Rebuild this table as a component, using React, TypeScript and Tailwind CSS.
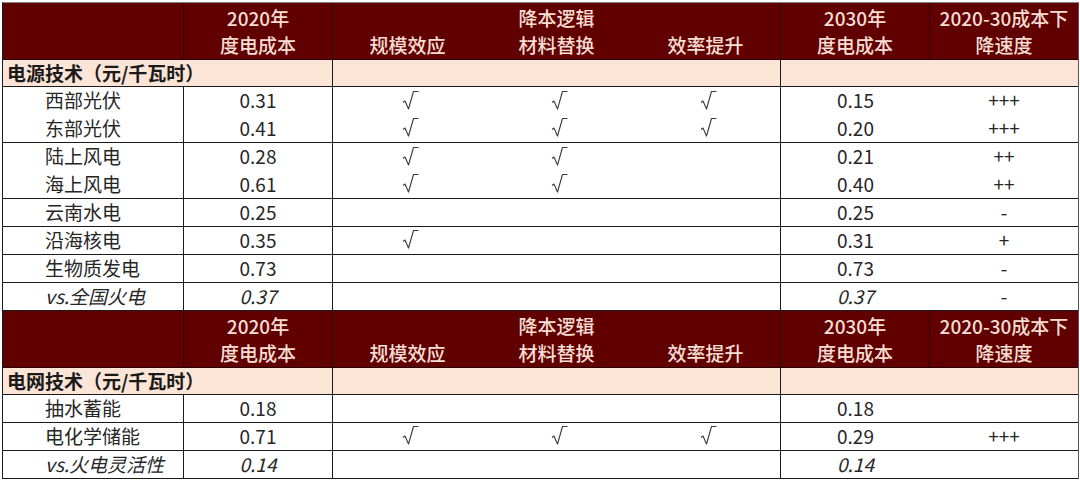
const COLS = 'grid grid-cols-[181px_149px_149px_149px_150px_149px_1fr]'

type RowData = {
  name: string
  a: string
  s?: boolean
  m?: boolean
  e?: boolean
  b: string
  speed?: string
  italic?: boolean
  line?: boolean
}

const power: RowData[] = [
  { name: '西部光伏', a: '0.31', s: true, m: true, e: true, b: '0.15', speed: '+++' },
  { name: '东部光伏', a: '0.41', s: true, m: true, e: true, b: '0.20', speed: '+++', line: true },
  { name: '陆上风电', a: '0.28', s: true, m: true, b: '0.21', speed: '++' },
  { name: '海上风电', a: '0.61', s: true, m: true, b: '0.40', speed: '++', line: true },
  { name: '云南水电', a: '0.25', b: '0.25', speed: '-', line: true },
  { name: '沿海核电', a: '0.35', s: true, b: '0.31', speed: '+', line: true },
  { name: '生物质发电', a: '0.73', b: '0.73', speed: '-', line: true },
  { name: 'vs.全国火电', a: '0.37', b: '0.37', speed: '-', italic: true, line: true },
]

const grid: RowData[] = [
  { name: '抽水蓄能', a: '0.18', b: '0.18', line: true },
  { name: '电化学储能', a: '0.71', s: true, m: true, e: true, b: '0.29', speed: '+++', line: true },
  { name: 'vs.火电灵活性', a: '0.14', b: '0.14', italic: true, line: true },
]

// radical-style tick, as drawn in the source sheet
function Tick() {
  return (
    <svg width="17" height="20" viewBox="0 0 17 20" className="-mt-[3px] ml-[6px]">
      <polyline
        points="1,12.5 3,11 6.5,19 11.5,1.5 16.5,1.5"
        fill="none"
        stroke="#3a3a3a"
        strokeWidth="1.1"
        strokeLinejoin="round"
      />
    </svg>
  )
}

function Header() {
  return (
    <div className={`${COLS} h-[57px] bg-[#600000] text-[#f9ddd2] font-medium leading-[27px] border-b border-[#2a0000]`}>
      <div className="border-r border-[#2a0000]" />
      <div className="flex flex-col items-center justify-center border-r border-[#2a0000]">
        <span>2020年</span>
        <span>度电成本</span>
      </div>
      <div className="col-span-3 flex flex-col justify-center border-r border-[#2a0000]">
        <div className="text-center">降本逻辑</div>
        <div className="grid grid-cols-3 text-center">
          <span>规模效应</span>
          <span>材料替换</span>
          <span>效率提升</span>
        </div>
      </div>
      <div className="flex flex-col items-center justify-center border-r border-[#2a0000]">
        <span>2030年</span>
        <span>度电成本</span>
      </div>
      <div className="flex flex-col items-center justify-center">
        <span>2020-30成本下</span>
        <span>降速度</span>
      </div>
    </div>
  )
}

function Section({ title }: { title: string }) {
  return (
    <div className={`${COLS} h-[27px] bg-[#fce4d6] border-b border-[#1a1a1a] text-[#1a1a1a] leading-[26px]`}>
      <div className="col-span-2 border-r border-[#1a1a1a] pl-[4px] font-bold">{title}</div>
      <div className="col-span-3 border-r border-[#1a1a1a]" />
      <div className="col-span-2" />
    </div>
  )
}

function Row({ r }: { r: RowData }) {
  return (
    <div
      className={`${COLS} h-[28px] leading-[26px] text-[#262626] ${r.line ? 'border-b border-[#1a1a1a]' : ''} ${r.italic ? 'italic text-[#333]' : ''}`}
    >
      <div className="border-r border-[#1a1a1a] pl-[42px] whitespace-nowrap">{r.name}</div>
      <div className="border-r border-[#1a1a1a] text-center">{r.a}</div>
      <div className="flex items-center justify-center">{r.s && <Tick />}</div>
      <div className="flex items-center justify-center">{r.m && <Tick />}</div>
      <div className="border-r border-[#1a1a1a] flex items-center justify-center">{r.e && <Tick />}</div>
      <div className="text-center">{r.b}</div>
      <div className="text-center not-italic">{r.speed}</div>
    </div>
  )
}

export default function App() {
  return (
    <div className="w-[1080px] h-[483px] bg-white pt-[2px] pl-[2px] font-['Noto_Sans_CJK_SC','Noto_Sans',sans-serif] text-[19px]">
      <div className="w-[1077px] border-l border-r border-t border-l-[#1a1a1a] border-r-[#555] border-t-[#888]">
        <Header />
        <Section title="电源技术（元/千瓦时）" />
        {power.map((r) => (
          <Row key={r.name} r={r} />
        ))}
        <Header />
        <Section title="电网技术（元/千瓦时）" />
        {grid.map((r) => (
          <Row key={r.name} r={r} />
        ))}
      </div>
    </div>
  )
}
